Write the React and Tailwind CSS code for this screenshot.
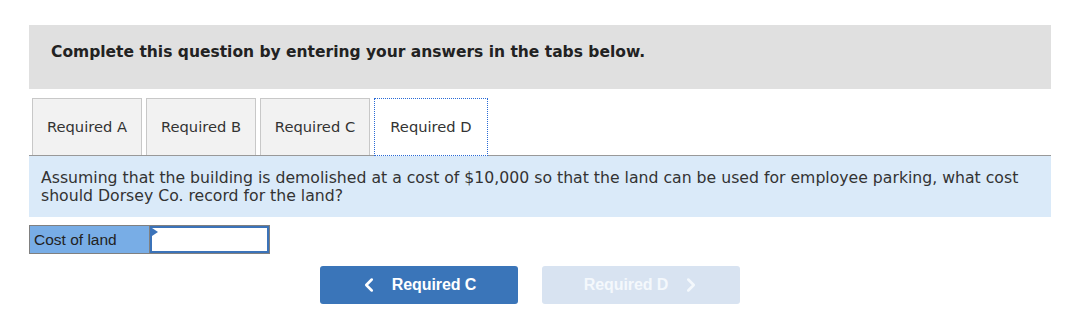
import React from "react";
import { ChevronLeft, ChevronRight } from "lucide-react";

const tabs = ["Required A", "Required B", "Required C", "Required D"];

export default function App() {
  return (
    <div className="min-h-screen bg-white pt-[25px] pl-[29px]">
      <div className="w-[1022px]">
        <div className="h-[64px] bg-[#e0e0e0] pl-[22px] pt-[17px]">
          <p className="font-['DejaVu_Sans',sans-serif] font-bold text-[15.5px] leading-[20px] text-[#222]">
            Complete this question by entering your answers in the tabs below.
          </p>
        </div>

        <div className="mt-[9px] flex gap-[4px] pl-[3px] border-b border-[#999]">
          {tabs.map((t, i) => {
            const active = i === 3;
            return (
              <div
                key={t}
                className={
                  active
                    ? "h-[58px] w-[114px] flex items-center justify-center bg-white border border-dotted border-[#2a6ad6] -mb-px font-['DejaVu_Sans',sans-serif] text-[14.7px] text-[#333]"
                    : "h-[57px] w-[110px] flex items-center justify-center bg-[#f2f2f2] border border-b-0 border-[#c8c8c8] font-['DejaVu_Sans',sans-serif] text-[14.7px] text-[#333]"
                }
              >
                {t}
              </div>
            );
          })}
        </div>

        <div className="bg-[#daeaf9] h-[61px] pl-[12px] pr-[20px] pt-[13px] font-['DejaVu_Sans',sans-serif] text-[15.7px] leading-[18px] text-[#333]">
          Assuming that the building is demolished at a cost of $10,000 so that the land can be used for employee parking, what cost should Dorsey Co. record for the land?
        </div>

        <div className="mt-[8px] flex w-[241px] h-[29px] border border-[#808080]">
          <div className="w-[120px] bg-[#78ade6] border-r border-[#808080] flex items-center pl-[4px] font-['Liberation_Sans',Arial,sans-serif] text-[15.5px] text-[#222]">
            Cost of land
          </div>
          <div className="relative flex-1 bg-white border-2 border-[#3b73b9]">
            <span className="absolute left-0 top-0 w-0 h-0 border-y-[4px] border-y-transparent border-l-[6px] border-l-[#3b73b9]" />
          </div>
        </div>

        <div className="mt-[12px] flex gap-[24px] pl-[291px]">
          <button className="w-[198px] h-[38px] rounded-[3px] bg-[#3a75b9] text-white flex items-center justify-center gap-[12px] pr-[4px] font-['Liberation_Sans',Arial,sans-serif] font-bold text-[16px] tracking-[-0.1px]">
            <ChevronLeft size={22} strokeWidth={2.8} />
            <span>Required C</span>
          </button>
          <button className="w-[198px] h-[38px] rounded-[3px] bg-[#d8e3f1] text-[#f4f8fc] flex items-center justify-center gap-[12px] pl-[4px] font-['Liberation_Sans',Arial,sans-serif] font-bold text-[16px] tracking-[-0.1px]">
            <span>Required D</span>
            <ChevronRight size={22} strokeWidth={2.8} />
          </button>
        </div>
      </div>
    </div>
  );
}
